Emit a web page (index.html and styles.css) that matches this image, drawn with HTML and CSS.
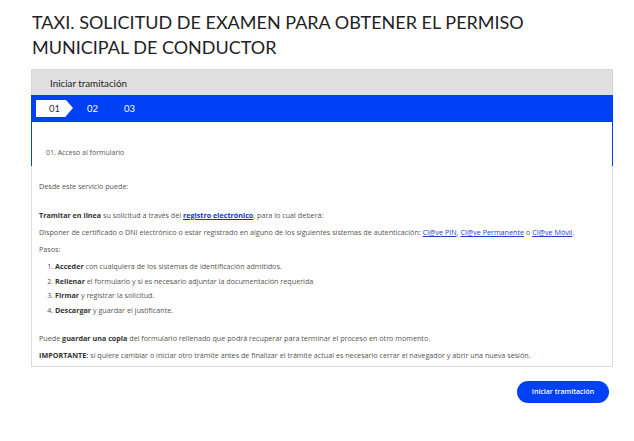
FILE: index.html
```html
<!DOCTYPE html>
<html lang="es">
<head>
<meta charset="utf-8">
<title>Taxi</title>
<link rel="stylesheet" href="styles.css">
</head>
<body>
<div class="page">
  <h1 class="title">TAXI. SOLICITUD DE EXAMEN PARA OBTENER EL PERMISO MUNICIPAL DE CONDUCTOR</h1>
  <div class="panel">
    <div class="panel-head">Iniciar tramitación</div>
    <div class="steps">
      <span class="step step-active">01</span>
      <span class="step">02</span>
      <span class="step">03</span>
    </div>
    <div class="step-body"><span class="step-name">01. Acceso al formulario</span></div>
    <div class="content">
      <p class="p-first">Desde este servicio puede:</p>
      <p><b>Tramitar en linea</b> su solicitud a través del <a class="link-strong" href="#">registro electrónico</a>, para lo cual deberá:</p>
      <p>Disponer de certificado o DNI electrónico o estar registrado en alguno de los siguientes sistemas de autenticación: <a href="#">Cl@ve PIN</a>, <a href="#">Cl@ve Permanente</a> o <a href="#">Cl@ve Móvil</a>.</p>
      <p>Pasos:</p>
      <ol class="steps-list">
        <li><b>Acceder</b> con cualquiera de los sistemas de identificación admitidos.</li>
        <li><b>Rellenar</b> el formulario y si es necesario adjuntar la documentación requerida</li>
        <li><b>Firmar</b> y registrar la solicitud.</li>
        <li><b>Descargar</b> y guardar el justificante.</li>
      </ol>
      <p>Puede <b>guardar una copia</b> del formulario rellenado que podrá recuperar para terminar el proceso en otro momento.</p>
      <p class="p-last"><b>IMPORTANTE:</b> si quiere cambiar o iniciar otro trámite antes de finalizar el trámite actual es necesario cerrar el navegador y abrir una nueva sesión.</p>
    </div>
  </div>
  <div class="actions">
    <button class="btn" type="button">Iniciar tramitación</button>
  </div>
</div>
</body>
</html>
```

FILE: styles.css
```css
html, body {
  margin: 0;
  padding: 0;
  background: #ffffff;
}
.page {
  width: 582px;
  padding: 10px 0 0 31px;
}
.title {
  margin: 0 0 9px 1px;
  font-family: "Lato", "Liberation Sans", sans-serif;
  font-weight: 400;
  font-size: 18px;
  line-height: 25px;
  color: #222222;
  width: 520px;
}
.panel {
  display: flex;
  flex-direction: column;
}
.panel-head {
  height: 25px;
  border: 1px solid #d6d6d6;
  border-bottom: none;
  background: #e1e0e0;
  display: flex;
  align-items: center;
  padding-left: 18px;
  font-family: "Lato", "Liberation Sans", sans-serif;
  font-size: 9.8px;
  color: #222222;
}
.steps {
  height: 27px;
  background: #0041f5;
  display: flex;
  align-items: center;
  padding-left: 5px;
}
.step {
  font-family: "Lato", "Liberation Sans", sans-serif;
  font-size: 9.5px;
  color: #ffffff;
  width: 37px;
}
.step-active {
  position: relative;
  background: #ffffff;
  color: #333333;
  width: 30px;
  height: 17px;
  line-height: 17px;
  padding-left: 13px;
  box-sizing: border-box;
  margin-right: 21px;
}
.step-active::after {
  content: "";
  position: absolute;
  top: 0;
  left: 30px;
  border-top: 8.5px solid transparent;
  border-bottom: 8.5px solid transparent;
  border-left: 7px solid #ffffff;
}
.step-body {
  height: 44px;
  border-left: 1px solid #0041f5;
  border-right: 1px solid #0041f5;
  box-sizing: border-box;
  padding: 26px 0 0 14px;
  font-family: "Open Sans", "Liberation Sans", sans-serif;
  font-size: 7px;
  color: #555555;
}
.content {
  border: 1px solid #dcdcdc;
  border-top: none;
  padding: 15px 7px 6px 7px;
  font-family: "Open Sans", "Liberation Sans", sans-serif;
  font-size: 7.2px;
  line-height: 10px;
  color: #555555;
}
.content p {
  margin: 0 0 7px 0;
}
.content .p-first {
  margin-bottom: 19px;
}
.content .p-last {
  margin-bottom: 0;
}
.content b {
  color: #333333;
  font-weight: 700;
}
.content a {
  color: #1a3fc9;
  text-decoration: underline;
}
.content a.link-strong {
  font-weight: 700;
  color: #0a36d0;
}
.steps-list {
  margin: 0 0 18px 0;
  padding-left: 16px;
}
.steps-list li {
  margin-bottom: 4.5px;
}
.actions {
  display: flex;
  justify-content: flex-end;
  padding: 14px 4px 0 0;
}
.btn {
  width: 92px;
  height: 22px;
  border: none;
  border-radius: 11px;
  background: #0041f5;
  color: #ffffff;
  font-family: "Open Sans", "Liberation Sans", sans-serif;
  font-size: 7px;
  font-weight: 600;
  padding: 0;
}
```
